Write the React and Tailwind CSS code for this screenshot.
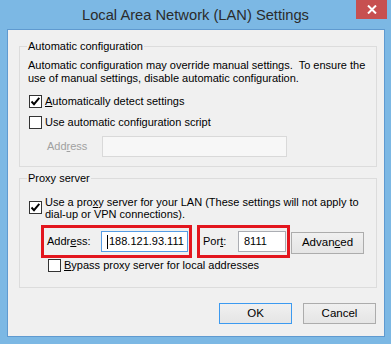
import { useState } from "react";

function CheckBox({ checked }) {
  return (
    <span className="w-[13px] h-[13px] shrink-0 border border-[#333333] bg-white flex items-center justify-center">
      {checked && (
        <svg width="11" height="11" viewBox="0 0 11 11">
          <path d="M1.5 5.5 L4 8.2 L9.3 1.8" fill="none" stroke="#000" strokeWidth="1.9" />
        </svg>
      )}
    </span>
  );
}

function Button({ children, primary, className = "" }) {
  return (
    <button
      className={
        "h-[21px] w-[73px] bg-gradient-to-b from-[#f0f0f0] to-[#e5e5e5] text-[11.5px] leading-none text-black border " +
        (primary ? "border-[#3c9af0] " : "border-[#acacac] ") +
        className
      }
    >
      {children}
    </button>
  );
}

export default function App() {
  const [autoDetect] = useState(true);
  const [useProxy] = useState(true);

  return (
    <div className="w-[391px] h-[344px] bg-[#7cb8e4] flex flex-col font-['Liberation_Sans',Arial,sans-serif] text-[11px] text-black">
      {/* title bar */}
      <div className="h-[29px] relative flex items-center justify-center">
        <span className="text-[14.7px] text-[#2b2b2b] pt-[1px]">Local Area Network (LAN) Settings</span>
        <div className="absolute top-0 right-[4px] w-[31px] h-[19px] bg-[#c75050] flex items-center justify-center">
          <svg width="10" height="9" viewBox="0 0 10 9">
            <path d="M1 0.5 L9 8.5 M9 0.5 L1 8.5" stroke="#fff" strokeWidth="2" />
          </svg>
        </div>
      </div>

      {/* client area */}
      <div className="ml-[7px] w-[378px] h-[308px] border border-[#5f9ad0] bg-[#f0f0f0] flex flex-col">
        {/* Automatic configuration */}
        <div className="mt-[16px] ml-[11px] w-[358px] border border-[#dcdcdc] pl-[8px] pb-[9px] flex flex-col">
          <div className="-mt-[8px] -ml-[1px] leading-[14px] w-fit px-[1px] bg-[#f0f0f0]">Automatic configuration</div>
          <div className="mt-[6px] leading-[13px]">
            <div className="whitespace-pre">Automatic configuration may override manual settings.  To ensure the</div>
            <div>use of manual settings, disable automatic configuration.</div>
          </div>
          <div className="mt-[10px] ml-[1px] h-[13px] flex items-center gap-[3px]">
            <CheckBox checked={autoDetect} />
            <span className="leading-[13px]">
              <u className="underline-offset-[1px]">A</u>utomatically detect settings
            </span>
          </div>
          <div className="mt-[8px] ml-[1px] h-[13px] flex items-center gap-[3px]">
            <CheckBox />
            <span className="leading-[13px]">Use automatic configuration script</span>
          </div>
          <div className="mt-[7px] ml-[19px] flex items-center">
            <span className="w-[55px] text-[#a0a0a0]">
              Add<u className="underline-offset-[1px]">r</u>ess
            </span>
            <div className="w-[185px] h-[21px] border border-[#d9d9d9] bg-[#f7f7f7]"></div>
          </div>
        </div>

        {/* Proxy server */}
        <div className="mt-[11px] ml-[11px] w-[358px] border border-[#dcdcdc] pl-[8px] pb-[15px] flex flex-col">
          <div className="-mt-[8px] -ml-[1px] leading-[14px] w-fit px-[1px] bg-[#f0f0f0]">Proxy server</div>
          <div className="mt-[11px] ml-[1px] flex items-start gap-[3px]">
            <span className="mt-[5px]">
              <CheckBox checked={useProxy} />
            </span>
            <div className="leading-[12px]">
              <div>
                Use a pro<u className="underline-offset-[1px]">x</u>y server for your LAN (These settings will not apply to
              </div>
              <div>dial-up or VPN connections).</div>
            </div>
          </div>

          <div className="mt-[5px] ml-[13px] flex items-start">
            <div className="w-[151px] h-[33px] border-[3px] border-[#e3161e] pl-[3px] flex items-center">
              <span className="w-[54px]">
                Addr<u className="underline-offset-[1px]">e</u>ss:
              </span>
              <div className="w-[87px] h-[21px] border border-[#569de5] bg-white flex items-center pl-[5px]">
                <span className="w-[1px] h-[14px] bg-black mr-[1px]"></span>
                <span>188.121.93.111</span>
              </div>
            </div>
            <div className="ml-[5px] w-[93px] h-[33px] border-[3px] border-[#e3161e] pl-[3px] flex items-center">
              <span className="w-[35px]">
                Por<u className="underline-offset-[1px]">t</u>:
              </span>
              <div className="w-[48px] h-[21px] border border-[#abadb3] bg-white flex items-center pl-[5px]">
                8111
              </div>
            </div>
            <Button className="ml-[1px] mt-[7px] h-[22px]">
              Advan<u className="underline-offset-[1px]">c</u>ed
            </Button>
          </div>

          <div className="mt-[1px] ml-[20px] h-[13px] flex items-center gap-[3px]">
            <CheckBox />
            <span className="leading-[13px]">
              <u className="underline-offset-[1px]">B</u>ypass proxy server for local addresses
            </span>
          </div>
        </div>

        {/* buttons */}
        <div className="mt-[15px] mr-[8px] flex justify-end gap-[11px]">
          <Button primary>OK</Button>
          <Button>Cancel</Button>
        </div>
      </div>
    </div>
  );
}
